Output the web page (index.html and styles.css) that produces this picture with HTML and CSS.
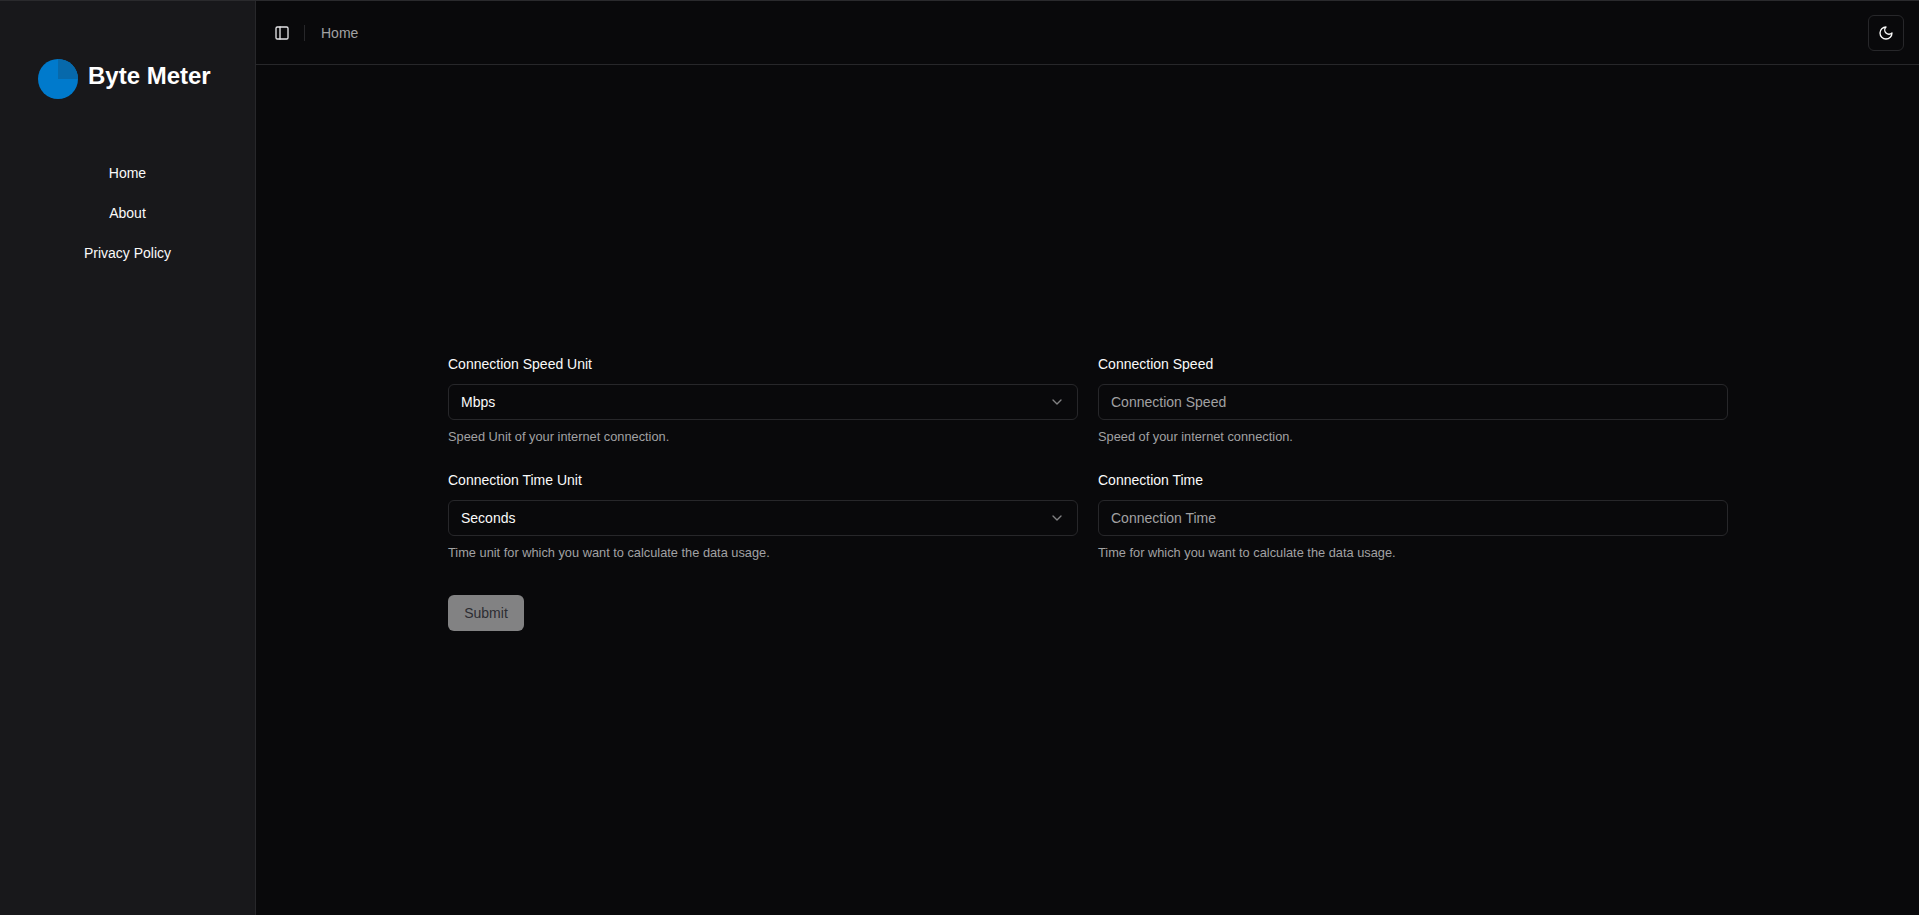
FILE: index.html
```html
<!DOCTYPE html>
<html lang="en">
<head>
<meta charset="utf-8">
<title>Byte Meter</title>
<link rel="stylesheet" href="styles.css">
</head>
<body>
<div class="app">
  <aside class="sidebar">
    <div class="brand">
      <svg class="pie" viewBox="0 0 40 40" width="40" height="40" aria-hidden="true">
        <circle cx="20" cy="20" r="20" fill="#007acc"/>
        <path d="M20 0a20 20 0 0 1 20 20H20Z" fill="#0769ab"/>
      </svg>
      <span class="brand-name">Byte Meter</span>
    </div>
    <nav class="nav">
      <a class="nav-link">Home</a>
      <a class="nav-link">About</a>
      <a class="nav-link">Privacy Policy</a>
    </nav>
  </aside>
  <div class="content">
    <header class="topbar">
      <svg class="icon icon-panel" viewBox="0 0 24 24" aria-hidden="true"><rect width="18" height="18" x="3" y="3" rx="2"/><path d="M9 3v18"/></svg>
      <span class="sep"></span>
      <span class="crumb">Home</span>
      <button class="theme" type="button" aria-label="Toggle theme">
        <svg class="icon" viewBox="0 0 24 24" aria-hidden="true"><path d="M12 3a6 6 0 0 0 9 9 9 9 0 1 1-9-9Z"/></svg>
      </button>
    </header>
    <main class="main">
      <form class="form">
        <div class="grid">
          <div class="field">
            <label class="label">Connection Speed Unit</label>
            <div class="control select"><span>Mbps</span>
              <svg class="icon chevron" viewBox="0 0 24 24" aria-hidden="true"><path d="m6 9 6 6 6-6"/></svg>
            </div>
            <p class="desc">Speed Unit of your internet connection.</p>
          </div>
          <div class="field">
            <label class="label">Connection Speed</label>
            <input class="control input" type="text" placeholder="Connection Speed">
            <p class="desc">Speed of your internet connection.</p>
          </div>
          <div class="field">
            <label class="label">Connection Time Unit</label>
            <div class="control select"><span>Seconds</span>
              <svg class="icon chevron" viewBox="0 0 24 24" aria-hidden="true"><path d="m6 9 6 6 6-6"/></svg>
            </div>
            <p class="desc">Time unit for which you want to calculate the data usage.</p>
          </div>
          <div class="field">
            <label class="label">Connection Time</label>
            <input class="control input" type="text" placeholder="Connection Time">
            <p class="desc">Time for which you want to calculate the data usage.</p>
          </div>
        </div>
        <button class="submit" type="button" disabled>Submit</button>
      </form>
    </main>
  </div>
</div>
</body>
</html>
```
FILE: styles.css
```css
* { box-sizing: border-box; }
html, body { height: 100%; }
body {
  margin: 0;
  background: #09090b;
  color: #fafafa;
  font-family: "Liberation Sans", Arial, sans-serif;
  font-size: 14px;
  overflow: hidden;
}
.app {
  display: flex;
  height: 915px;
  border-top: 1px solid #2a2a2d;
}
.sidebar {
  width: 256px;
  flex: none;
  background: #18181b;
  border-right: 1px solid #27272a;
  padding-top: 58px;
}
.brand {
  display: flex;
  align-items: center;
  gap: 10px;
  padding-left: 38px;
}
.pie { flex: none; }
.brand-name {
  font-size: 24px;
  line-height: 32px;
  font-weight: 700;
  color: #fff;
  position: relative;
  top: -3px;
}
.nav {
  display: flex;
  flex-direction: column;
  align-items: center;
  gap: 20px;
  margin-top: 64px;
}
.nav-link {
  line-height: 20px;
  color: #fafafa;
}
.content {
  flex: 1;
  min-width: 0;
  display: flex;
  flex-direction: column;
}
.topbar {
  height: 64px;
  flex: none;
  display: flex;
  align-items: center;
  border-bottom: 1px solid #27272a;
  padding: 0 15px 0 18px;
}
.icon {
  width: 16px;
  height: 16px;
  fill: none;
  stroke: currentColor;
  stroke-width: 2;
  stroke-linecap: round;
  stroke-linejoin: round;
  flex: none;
}
.icon-panel { color: #e4e4e7; }
.sep {
  width: 1px;
  height: 16px;
  background: #27272a;
  margin-left: 14px;
}
.crumb {
  margin-left: 16px;
  color: #a1a1a3;
  line-height: 20px;
}
.theme {
  margin-left: auto;
  width: 36px;
  height: 36px;
  display: flex;
  align-items: center;
  justify-content: center;
  background: #09090b;
  border: 1px solid #27272a;
  border-radius: 6px;
  color: #fafafa;
  padding: 0;
}
.main {
  flex: 1;
  padding: 289px 0 0 192px;
}
.form { width: 1280px; }
.grid {
  display: grid;
  grid-template-columns: 630px 630px;
  column-gap: 20px;
  row-gap: 25px;
}
.field { display: flex; flex-direction: column; }
.label {
  line-height: 20px;
  margin-bottom: 10px;
  color: #fafafa;
}
.control {
  height: 36px;
  width: 100%;
  background: transparent;
  border: 1px solid #27272a;
  border-radius: 6px;
  padding: 0 12px;
  font-family: inherit;
  font-size: 14px;
  color: #fafafa;
  outline: none;
}
.select {
  display: flex;
  align-items: center;
  justify-content: space-between;
}
.chevron { opacity: 0.5; }
.input::placeholder { color: #a1a1a3; opacity: 1; }
.desc {
  margin: 9px 0 0;
  font-size: 12.8px;
  line-height: 16px;
  color: #a1a1a3;
}
.submit {
  display: block;
  margin-top: 34px;
  width: 76px;
  height: 36px;
  background: #fafafa;
  opacity: 0.5;
  border: none;
  border-radius: 6px;
  color: #52525b;
  font-family: inherit;
  font-size: 14px;
  padding: 0;
}
```
